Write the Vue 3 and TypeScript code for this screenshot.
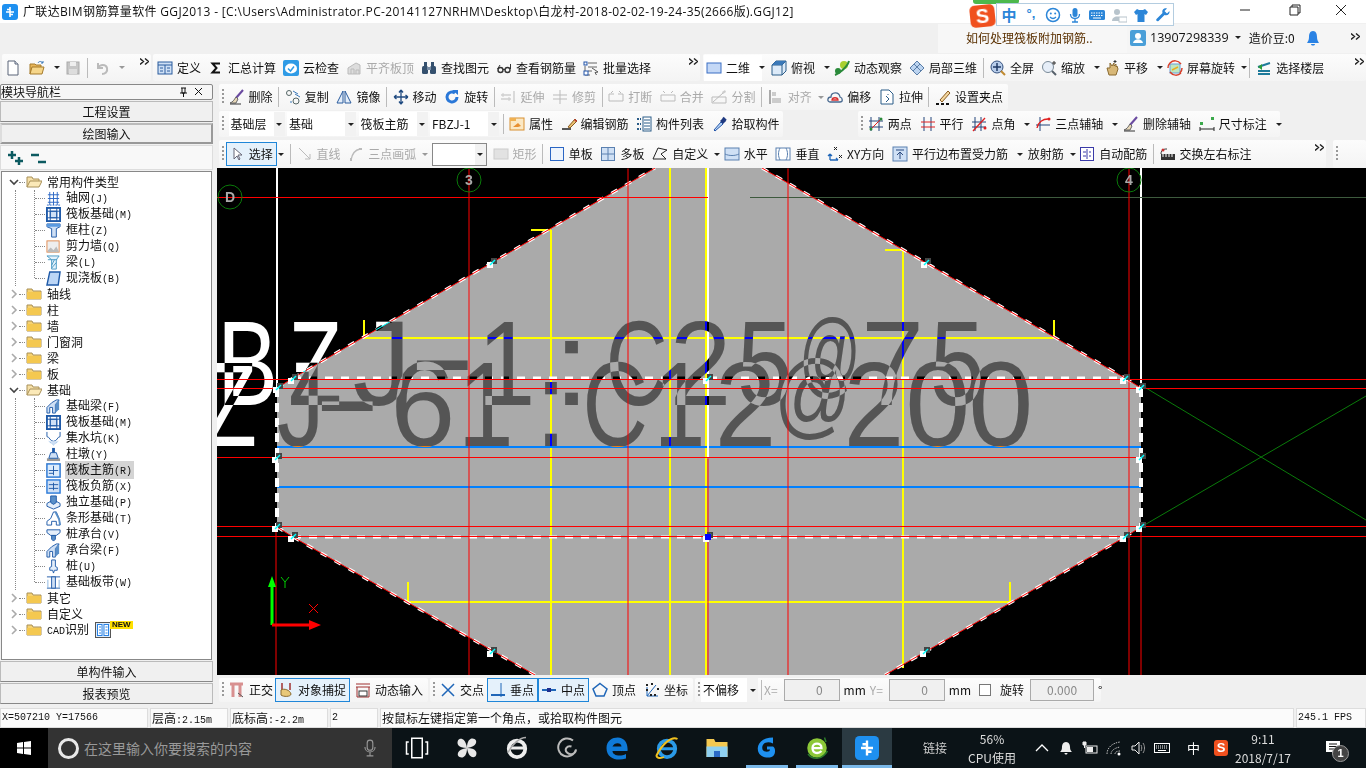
<template>
  <div class="app">
    <!-- 标题栏 -->
    <div class="title">
      <svg class="ic app-ic" viewBox="0 0 16 16" v-html="ICONS.app" />
      <span class="title-text">广联达BIM钢筋算量软件 GGJ2013 - [C:\Users\Administrator.PC-20141127NRHM\Desktop\白龙村-2018-02-02-19-24-35(2666版).GGJ12]</span>
      <svg class="win" viewBox="0 0 120 16" v-html="ICONS.win" />
      <!-- 搜狗输入法浮条 -->
      <div class="ime">
        <i class="ime-green" />
        <div class="ime-s">S</div>
        <div class="ime-bar">
          <span class="ime-slot ime-zh">中</span>
          <span class="ime-slot ime-dot">°,</span>
          <svg v-for="n in IME_ICONS" :key="n" class="ime-slot ic" viewBox="0 0 16 16" v-html="ICONS[n]" />
        </div>
      </div>
    </div>

    <!-- 资讯/账号条 -->
    <div class="menu">
      <div class="news">如何处理筏板附加钢筋..</div>
      <div class="account">
        <svg class="ic" viewBox="0 0 16 16" v-html="ICONS.user" />
        <span class="phone">13907298339</span>
        <i class="caret" />
        <span class="beans">造价豆:0</span>
        <svg class="ic bell" viewBox="0 0 16 16" v-html="ICONS.bell" />
        <svg class="more" viewBox="0 0 9 7" v-html="ICONS.more" />
      </div>
    </div>

    <!-- 工具栏 -->
    <div v-for="row in ROWS" :key="row.cls" class="row" :class="row.cls">
      <div v-for="g in row.groups" :key="g.cls" class="grp" :class="g.cls">
        <template v-for="(it, idx) in g.items" :key="idx">
          <i v-if="it.k === 'grip'" class="grip" />
          <i v-else-if="it.k === 'sep'" class="sep" />
          <svg v-else-if="it.k === 'more'" class="more" viewBox="0 0 9 7" v-html="ICONS.more" />
          <div v-else-if="it.k === 'combo'" class="combo" :class="it.cls" :style="{ width: it.w + 'px' }">
            <span>{{ it.t }}</span><b><i class="caret" /></b>
          </div>
          <div v-else-if="it.k === 'input'" class="input" :style="{ width: it.w + 'px' }">{{ it.t }}</div>
          <i v-else-if="it.k === 'check'" class="check" />
          <div v-else class="item" :class="[{ off: it.off, on: it.on }, it.cls]">
            <svg v-if="it.i" class="ic" viewBox="0 0 16 16" v-html="ICONS[it.i]" />
            <span v-if="it.t">{{ it.t }}</span>
            <i v-if="it.caret" class="caret" />
          </div>
        </template>
      </div>
    </div>

    <!-- 模块导航栏 -->
    <aside class="nav">
      <div class="nav-head">
        <span>模块导航栏</span>
        <svg class="nav-pin" viewBox="0 0 24 10" v-html="ICONS.pin" />
      </div>
      <div class="nav-btn">工程设置</div>
      <div class="nav-btn cur">绘图输入</div>
      <div class="nav-tools"><svg viewBox="0 0 42 16" v-html="ICONS.plusminus" /></div>
      <div class="tree">
        <template v-for="node in TREE" :key="node.t">
          <div class="node">
            <svg class="chev" viewBox="0 0 10 10" v-html="node.kids ? ICONS.chevOpen : ICONS.chevShut" />
            <i class="dots" />
            <svg class="ic" viewBox="0 0 16 16" v-html="node.kids ? ICONS.folderOpen : ICONS.folder" />
            <span class="node-t">
              <template v-if="node.cad"><span class="mono">CAD</span>识别</template>
              <template v-else>{{ node.t }}</template>
            </span>
            <template v-if="node.cad">
              <svg class="ic cad" viewBox="0 0 16 16" v-html="ICONS.cad" />
              <span class="new">NEW</span>
            </template>
          </div>
          <div v-if="node.kids" class="kidwrap">
            <div class="kids">
              <div v-for="kid in node.kids" :key="kid.t" class="kid" :class="{ sel: kid.sel }">
                <svg class="ic" viewBox="0 0 16 16" v-html="ICONS[kid.i]" />
                <span class="kid-t">{{ kid.t }}<span class="mono">({{ kid.key }})</span></span>
              </div>
            </div>
          </div>
        </template>
      </div>
      <div class="nav-btn">单构件输入</div>
      <div class="nav-btn">报表预览</div>
    </aside>

    <!-- 绘图区 -->
    <svg class="canvas" viewBox="217 168 1149 507">
      <rect x="217" y="168" width="1149" height="507" fill="#000" />
      <polygon :points="SHAPE" fill="#aaa" />
      <line v-for="(l, i) in YELLOW" :key="'y' + i" :x1="l[0]" :y1="l[1]" :x2="l[2]" :y2="l[3]" stroke="#ff0" stroke-width="2" />
      <line v-for="y in [447, 487]" :key="'b' + y" x1="277" x2="1141" :y1="y" :y2="y" stroke="#0080ff" stroke-width="2" />
      <line v-for="(l, i) in WHITE" :key="'w' + i" :x1="l[0]" :y1="l[1]" :x2="l[2]" :y2="l[3]" stroke="#fff" stroke-width="2" />
      <line x1="1141" y1="385" x2="1366" y2="520" stroke="#0a7a0a" />
      <line x1="1141" y1="527" x2="1366" y2="396" stroke="#0a7a0a" />
      <line x1="750" y1="197.5" x2="1366" y2="197.5" stroke="#3d5a3d" />
      <!-- 虚线边界 -->
      <polyline v-for="(p, i) in DIAGS" :key="'d' + i" :points="p" fill="none" stroke="#fff" stroke-width="3" stroke-dasharray="7 9" />
      <polyline v-for="(p, i) in DIAGS" :key="'r' + i" :points="p" fill="none" stroke="#f00" />
      <line v-for="y in [378, 537]" :key="'h' + y" x1="293" x2="1125" :y1="y" :y2="y" stroke="#fff" stroke-width="3" stroke-dasharray="8 8" />
      <line v-for="x in [277, 1141]" :key="'v' + x" :x1="x" :x2="x" y1="388" y2="527" stroke="#fff" stroke-width="4" stroke-dasharray="9 6" />
      <!-- 反色大字标注 -->
      <text
        v-for="(g, i) in GLYPHS" :key="'g' + i" class="stamp"
        :x="g.x" :y="g.y" :font-size="g.size" :textLength="g.len" lengthAdjust="spacingAndGlyphs"
      >{{ g.ch }}</text>
      <line v-for="(l, i) in RED" :key="'e' + i" :x1="l[0]" :y1="l[1] + 0.5" :x2="l[2]" :y2="l[3] + 0.5" stroke="#f00" />
      <!-- 轴号 -->
      <g v-for="a in AXES" :key="a.t">
        <circle :cx="a.x" :cy="a.y" r="12" fill="none" stroke="#0a7a0a" />
        <text class="axis" :x="a.x" :y="a.y + 5">{{ a.t }}</text>
      </g>
      <!-- 夹点 -->
      <g v-for="(h, i) in HANDLES" :key="'p' + i" :transform="`translate(${h[0]} ${h[1]})`">
        <rect x="-1" y="-5" width="6" height="6" fill="#444" />
        <rect x="-5" y="-1" width="6" height="6" fill="#fff" />
        <path d="M-2 2 3 -3" stroke="#0ff" stroke-width="1.5" />
      </g>
      <rect x="705" y="534" width="6" height="6" fill="#00f" />
      <!-- 坐标系 -->
      <path d="M270.5 625V587H268L272 576 276 587H273.5V625Z" fill="#0f0" />
      <path d="M272 623.500H309V620L321 625 309 630V626.500H272Z" fill="#f00" />
      <path d="M281 577 285 582 289 577M285 582V588" fill="none" stroke="#0c0" />
      <path d="M309 604 318 613M318 604 309 613" fill="none" stroke="#f00" />
    </svg>

    <!-- 状态栏 -->
    <div class="status">
      <div class="cell s1 mono">X=507210 Y=17566</div>
      <div class="cell s2">层高<span class="mono">:2.15m</span></div>
      <div class="cell s3">底标高<span class="mono">:-2.2m</span></div>
      <div class="cell s4 mono">2</div>
      <div class="cell s5">按鼠标左键指定第一个角点，或拾取构件图元</div>
      <div class="cell s6 mono">245.1 FPS</div>
    </div>

    <!-- 任务栏 -->
    <div class="task">
      <div class="start"><svg class="ic" viewBox="0 0 16 16" v-html="ICONS.winlogo" /></div>
      <div class="search">
        <i class="ring" />
        <span>在这里输入你要搜索的内容</span>
        <svg class="ic mic" viewBox="0 0 16 16" v-html="ICONS.micGrey" />
      </div>
      <div v-for="t in TASK" :key="t.i" class="task-btn" :class="{ open: t.open, act: t.act }">
        <svg class="tb-ic" viewBox="0 0 16 16" v-html="ICONS[t.i]" />
      </div>
      <div class="tray-link">链接</div>
      <div class="cpu"><span>56%</span><span>CPU使用</span></div>
      <div class="tray">
        <svg v-for="n in TRAY" :key="n" class="ic" viewBox="0 0 16 16" v-html="ICONS[n]" />
        <span class="tray-zh">中</span>
        <div class="tray-s">S</div>
      </div>
      <div class="clock"><span>9:11</span><span>2018/7/17</span></div>
      <div class="notify">
        <svg class="ic" viewBox="0 0 16 16" v-html="ICONS.note" />
        <span class="badge">1</span>
      </div>
    </div>
  </div>
</template>

<script setup lang="ts">
interface Item {
  k?: string
  i?: string
  t?: string
  off?: boolean
  on?: boolean
  caret?: boolean
  w?: number
  cls?: string
}

const IME_ICONS = ['smile', 'imeMic', 'imeKbd', 'imePerson', 'shirt', 'wrench']
const TRAY = ['trayUp', 'trayBell', 'trayPower', 'trayWifi', 'trayVol', 'trayKbd']
const TASK = [
  { i: 'tablet' }, { i: 'fan' }, { i: 'ieWhite' }, { i: 'swirl' }, { i: 'edge' },
  { i: 'ie', }, { i: 'explorer', }, { i: 'gsoft', open: true }, { i: 'greenE', open: true }, { i: 'app', act: true },
]

const l = (c: string, w = 1) => `fill="none" stroke="${c}" stroke-width="${w}"`

// 图标都是 16x16 的手绘简化版
const ICONS: Record<string, string> = {
  app: `<rect width="16" height="16" rx="3" fill="#1e90f0"/><path d="M8 3v10M4 8h8M5 5.500h3M8 10.500h3" ${l('#fff', 1.6)}/>`,
  win: `<path d="M0 8h10" ${l('#222')}/><path d="M50 5h8v8h-8zM52 5V3h8v8h-2" ${l('#222')}/><path d="M96 3l10 10M106 3 96 13" ${l('#222')}/>`,
  more: `<path d="M0 0.500 3.500 3.500 0 6.500M5 0.500 8.500 3.500 5 6.500" ${l('#222', 1.4)}/>`,
  smile: `<circle cx="8" cy="8" r="6.500" ${l('#2c86d8', 1.5)}/><circle cx="5.800" cy="6.500" r="1" fill="#2c86d8"/><circle cx="10.200" cy="6.500" r="1" fill="#2c86d8"/><path d="M5 10c2 2 4 2 6 0" ${l('#2c86d8', 1.3)}/>`,
  imeMic: `<rect x="5.500" y="1" width="5" height="9" rx="2.500" fill="#2c86d8"/><path d="M3.500 7c0 6 9 6 9 0M8 12v3M5 15h6" ${l('#2c86d8', 1.3)}/>`,
  imeKbd: `<rect y="3" width="16" height="10" rx="1.500" fill="#2c86d8"/><path d="M2 6h12M2 8.500h12" stroke="#fff" stroke-dasharray="1.500 1"/><path d="M4 11h8" stroke="#fff"/>`,
  imePerson: `<circle cx="6" cy="5" r="3" fill="#b8c4cc"/><path d="M1 14c0-6 10-6 10 0z" fill="#b8c4cc"/><rect x="8" y="10" width="8" height="5" fill="#fff" stroke="#b8c4cc"/>`,
  shirt: `<path d="M4 2 1 5l2 3 1.500-1V15h7V7L13 8l2-3-3-3-2 1H6z" fill="#2c86d8"/>`,
  wrench: `<path d="M14.500 4 12 6.500 9.500 4 12 1.500C9 0.500 6.500 3 7.500 6L1.500 12c-1 1 .5 3 2 2l6-6c3 1 5.500-1 5-4z" fill="#2c86d8"/>`,
  user: `<rect width="16" height="16" rx="2" fill="#4a9fd8"/><circle cx="8" cy="6" r="3" fill="#fff"/><path d="M3 13c1-5 9-5 10 0z" fill="#fff"/>`,
  bell: `<path d="M8 1c-3 0-4 3-4 6 0 3-1 4-2 6h12c-1-2-2-3-2-6 0-3-1-6-4-6z" fill="#2a82e4"/><path d="M6 14c0 2 4 2 4 0z" fill="#2a82e4"/>`,
  new: `<path d="M3 1h7l3 3v11H3z" fill="#fff" stroke="#5a6578"/><path d="M10 1v3h3" fill="#dfe5ef" stroke="#5a6578"/>`,
  open: `<path d="M1 14V4h5l1 1h5v2" fill="#e8b65a" stroke="#a57a2b"/><path d="M1 14 3 7h12l-2 7z" fill="#f6d68a" stroke="#a57a2b"/><path d="M9 3c1-2 3-2 5 0M14 1v2h-2" ${l('#3a78b8')}/>`,
  save: `<rect x="2" y="2" width="12" height="12" fill="#c6c6c6" stroke="#aaa"/><rect x="5" y="2" width="6" height="4" fill="#eee"/><rect x="4" y="9" width="8" height="5" fill="#ddd"/>`,
  undo: `<path d="M4 3v5h5M4 8c2-4 8-4 9 0s-2 6-5 6" ${l('#bbb', 2)}/>`,
  define: `<rect x="1" y="2" width="14" height="12" fill="#cfe0f5" stroke="#2b5c9e"/><path d="M1 5h14M8 5v9M3 8h3M3 11h3M10 8h3M10 11h3" ${l('#2b5c9e')}/>`,
  sigma: `<path d="M12 3.500H4.500L8.500 8l-4 4.500H12" ${l('#111', 2)}/>`,
  cloud: `<rect width="16" height="16" rx="2" fill="#2f9be6"/><ellipse cx="8" cy="8.500" rx="6" ry="5" fill="#fff"/><path d="M5 8.500 7.500 11 11 6.500" ${l('#2f9be6', 1.500)}/>`,
  flush: `<path d="M2 14V8l8-5 4 2v9z" fill="#ddd" stroke="#bbb"/><path d="M5 14V9h3v5M10 14v-4h3v4" ${l('#bbb')}/>`,
  binocs: `<rect x="1" y="6" width="6" height="8" rx="1.500" fill="#34506e"/><rect x="9" y="6" width="6" height="8" rx="1.500" fill="#34506e"/><rect x="3" y="2" width="3" height="5" fill="#34506e"/><rect x="10" y="2" width="3" height="5" fill="#34506e"/><rect x="6" y="7" width="4" height="3" fill="#7a8ea6"/>`,
  glasses: `<circle cx="4.500" cy="10" r="2.500" ${l('#333', 1.4)}/><circle cx="11.500" cy="10" r="2.500" ${l('#333', 1.4)}/><path d="M7 9.500h2M1.500 9 4 5M14.500 9V4" ${l('#333')}/>`,
  batch: `<rect x="1" y="2" width="3" height="3" fill="none" stroke="#2255aa"/><path d="M5 3h9M5 7h9M5 11h4M2 6v9h5" ${l('#666')}/><rect x="1" y="11" width="4" height="4" fill="#fff" stroke="#2255aa"/><path d="M9 8l6 4-3 .5 1.500 2.500" ${l('#555')}/>`,
  view2d: `<rect x="1" y="3" width="14" height="10" fill="#c4d8f6" stroke="#3a6fc4"/>`,
  view3d: `<path d="M1 5 5 1h10v10l-4 4H1z" fill="#dceaf8" stroke="#2b5c88"/><path d="M1 5h10v10M11 5l4-4" ${l('#2b5c88')}/><path d="M1 5 5 1h10l-4 4z" fill="#3a78b8"/>`,
  orbit: `<circle cx="10" cy="5" r="4" fill="#a8d030"/><path d="M1 15C4 14 13 8 15 1" ${l('#2a8a3a', 2)}/><circle cx="4" cy="11" r="3" fill="#2a8a3a"/>`,
  local3d: `<path d="M1 8 8 1l7 7-7 7z" fill="#bcd4f0" stroke="#5a7ea8"/><path d="M5 4l7 7M8 1v0M4 11l7-7" ${l('#5a7ea8')}/>`,
  full: `<circle cx="7" cy="7" r="6" fill="#b8cdea" stroke="#33507e"/><path d="M7 3v8M3 7h8" ${l('#1f3a66', 1.500)}/><path d="M11 11l4 4" ${l('#c08a30', 2)}/>`,
  zoom: `<circle cx="7" cy="7" r="5.500" fill="#e6eef8" stroke="#7a8a98"/><path d="M11 11l4 4" ${l('#56606a', 2)}/><path d="M13 1v4M11 3h4" ${l('#333')}/>`,
  pan: `<path d="M3 8l2 7h7l2-6-1-3-1 1V4l-2 2V3L8 6 6 3v5z" fill="#d8b878" stroke="#8a6a30"/><path d="M11 0v3M9.500 1.500h3" ${l('#333')}/>`,
  rot: `<rect x="3" y="4" width="10" height="9" fill="#bfe6c0" stroke="#6aa0d8"/><path d="M3 3c3-3 8-3 11 1M14 13c-3 3-8 3-11-1M1 8c0-2 1-4 2-5M15 8c0 2-1 4-2 5" ${l('#d8402a', 1.500)}/><path d="M5 10l6-3" ${l('#e8b020', 1.500)}/>`,
  floors: `<path d="M2 7 14 3M2 11h12M2 14h12" ${l('#1e7a9a', 2)}/><path d="M2 7 6 4v6z" fill="#2a9a3a"/>`,
  broom: `<path d="M14 1 7 9" ${l('#6a4aa0', 2)}/><path d="M7 8l2 2-2 4H1c3-1 4-3 6-6z" fill="#e8d8b8" stroke="#666"/><path d="M1 15h11" ${l('#333')}/>`,
  copy: `<circle cx="4" cy="4" r="2.500" ${l('#566')}/><circle cx="11" cy="12" r="3" ${l('#566')}/><path d="M8 2l5 3M15 8l-5-3M7 13H5" ${l('#3a78b8')}/>`,
  mirror: `<path d="M7 2 1 14h6zM9 2l6 12H9z" fill="#e4eefa" stroke="#2b5c9e"/>`,
  move: `<path d="M8 1v14M1 8h14M8 1 6 3.500M8 1l2 2.500M8 15l-2-2.500M8 15l2-2.500M1 8l2.500-2M1 8l2.500 2M15 8l-2.500-2M15 8l-2.500 2" ${l('#1f4a80', 1.300)}/>`,
  spin: `<path d="M13 8a5 5 0 1 1-2-4" ${l('#2a78d8', 3)}/><path d="M8 1h6v5z" fill="#2a78d8"/>`,
  extend: `<path d="M14 2v12M1 6h10M1 10h10" ${l('#bbb')}/><path d="M3 4v4M9 8v4" stroke="#ccc"/>`,
  trim: `<path d="M8 1v14M1 6h14M1 10h14" ${l('#bbb')}/>`,
  brk: `<path d="M1 5h5M10 5h5M1 12h14M1 5v7M15 5v7" ${l('#bbb')}/><path d="M5 2 3 4M11 2l2 2" ${l('#bbb')}/>`,
  merge: `<path d="M1 6h14M1 12h14M1 6v6M15 6v6" ${l('#bbb')}/><path d="M3 2l2 2M13 2l-2 2" ${l('#bbb')}/>`,
  split: `<path d="M1 14V8h14v6zM2 13l10-9" ${l('#bbb')}/><path d="M11 3l3-2 1 2-3 2z" fill="#ccc"/>`,
  alignL: `<path d="M2 1v14" ${l('#aaa', 2)}/><rect x="4" y="3" width="4" height="4" fill="#ccc"/><rect x="4" y="9" width="9" height="5" fill="#ccc"/>`,
  offset: `<path d="M3 13c-3 0-3-5 1-5 0-5 8-6 9 0 3 1 3 5 0 5z" ${l('#4a6a90', 1.300)}/><path d="M5 11c0-3 6-3 6 0z" ${l('#d83030', 1.300)}/>`,
  stretch: `<path d="M2 1h8l4 4v10H2z" fill="#fff" stroke="#2b5c88"/><path d="M7 7l3 3-3 3M9 5v1" ${l('#2b5c88')}/>`,
  grips: `<path d="M1 15h3M6 15h3M11 15h3" ${l('#111', 2)}/><path d="M5 11 13 2l2 2-8 9z" fill="#f4d8a0" stroke="#8a5a20"/>`,
  prop: `<rect x="1" y="2" width="14" height="12" fill="#fbe8c4" stroke="#d89030"/><path d="M1 2h6v3H1z" fill="#f0b050"/><path d="M4 11l5-4 3 3-3 1z" fill="#e89030"/>`,
  pencil: `<path d="M1 13h9" ${l('#222', 1.500)}/><path d="M7 11 14 3l2 2-7 7z" fill="#e8c070" stroke="#8a5a20"/><path d="M14 3l2 2 -1 1-2-2z" fill="#c03030"/>`,
  list: `<rect x="7" y="1" width="8" height="14" fill="#fff" stroke="#2b5c88"/><path d="M8 4h6M8 7h6M8 10h6M8 13h6" stroke="#2b5c88"/><path d="M1 3h4M1 8h4M1 13h4" stroke="#2b5c88" stroke-dasharray="2 1" stroke-width="2"/>`,
  pick: `<path d="M2 14 9 6l2 2-8 7z" fill="#b8d4f4" stroke="#2255aa"/><path d="M8 5l3-3 3 3-3 3z" fill="#1f3a80"/><path d="M11 1.500l3 3" ${l('#1f3a80', 2)}/>`,
  twoPt: `<path d="M3 1v14M11 1v14M1 5h14M1 11h14" ${l('#22447a')}/><path d="M3 13 13 3" ${l('#e02020')}/><circle cx="3" cy="13" r="1.500" fill="#2a8a3a"/><circle cx="13" cy="3" r="1.500" fill="#2a8a3a"/>`,
  para: `<path d="M4 1v14M11 1v14" ${l('#22447a')}/><path d="M1 6h14M1 11h14" ${l('#e02020')}/>`,
  angle: `<path d="M4 1v14M10 1v14M1 6h14M1 11h14" ${l('#22447a')}/><path d="M2 15 14 2" ${l('#e02020', 1.300)}/><circle cx="14" cy="12" r="1.500" fill="#e02020"/>`,
  threePt: `<path d="M5 1v14M1 9h14" ${l('#22447a')}/><path d="M2 12C3 6 8 3 13 3" ${l('#e02020', 1.300)}/><circle cx="14" cy="3" r="1.500" fill="#e02020"/>`,
  dim: `<path d="M1 11v4M15 11v4M1 13h14" ${l('#222')}/><rect x="1" y="6" width="3" height="3" fill="#3aa84a"/><rect x="12" y="1" width="3" height="3" fill="#3aa84a"/>`,
  cursor: `<path d="M5 2v11l3-3 2 4 1-1-2-4h4z" fill="#fff" stroke="#667"/>`,
  line: `<path d="M2 2 13 13M13 8v5H8" ${l('#bbb')}/>`,
  arc: `<path d="M3 14C4 8 7 4 12 3" ${l('#bbb', 1.300)}/><rect x="2" y="12" width="2" height="3" fill="#bbb"/><rect x="11" y="2" width="3" height="2" fill="#bbb"/>`,
  rect: `<rect x="1" y="3" width="14" height="10" fill="#e2e2e2" stroke="#ccc"/>`,
  single: `<rect x="1.500" y="1.500" width="13" height="13" fill="#eef4fc" stroke="#2b66c4"/>`,
  multi: `<rect x="1.500" y="1.500" width="13" height="13" fill="#cfe0f5" stroke="#5a80b0"/><path d="M8 1.500v13M1.500 8h13" ${l('#5a80b0')}/>`,
  custom: `<path d="M1 13 6 2l9 2-6 4 5 5z" ${l('#222')}/>`,
  horiz: `<rect x="1" y="2" width="14" height="12" fill="#cfe0f5" stroke="#5a80b0"/><path d="M1 8c4 2 10 2 14 0" ${l('#5a80b0')}/>`,
  vert: `<rect x="1" y="2" width="14" height="12" fill="#fff" stroke="#5a80b0"/><path d="M5 2c-2 4-2 8 0 12M11 2c2 4 2 8 0 12" ${l('#5a80b0')}/>`,
  xy: `<path d="M3 8v6M3 14h8M3 8 1 10M3 8l2 2M11 14l-2-2" ${l('#1f66b8', 1.300)}/><path d="M7 1l3 3M10 1 7 4M12 9l3 3M15 9l-3 3" ${l('#222')}/>`,
  paraPlace: `<rect x="1" y="1" width="14" height="14" fill="#cfe0f5" stroke="#5a80b0"/><path d="M8 13V6M5 9l3-3 3 3M4 4h8" ${l('#2b4a80')}/>`,
  auto: `<rect x="1.500" y="1.500" width="13" height="13" fill="#fff" stroke="#3a3aa8"/><path d="M8 3v10M4 6h3M4 10h3M10 6h2M10 10h2" ${l('#3a3aa8')}/>`,
  swap: `<path d="M1 8c0-5 4-5 6-5" ${l('#333')}/><rect x="1" y="8" width="14" height="6" fill="#333"/><path d="M3 8v3M6 8v3M9 8v3M12 8v3" stroke="#fff"/><circle cx="3" cy="4" r="1.500" fill="#c83030"/>`,
  ortho: `<path d="M1 2h13M4 2v13M11 2v13" ${l('#d89090', 3)}/><path d="M9 11l5 4" ${l('#555')}/>`,
  snap: `<path d="M4 1v7M12 1v7" ${l('#a03030', 1.500)}/><path d="M3 8c3-2 9 0 10 4 0 3-8 3-10 1z" fill="#e8c878" stroke="#8a6a30"/>`,
  dyn: `<path d="M1 2h14M1 5h14M2 5v10h12V5" ${l('#a03030')}/><rect x="4" y="9" width="8" height="5" fill="#fff" stroke="#333"/>`,
  cross: `<path d="M2 2 14 14M14 2 2 14" ${l('#1f66b8', 1.500)}/>`,
  perp: `<path d="M1 13h14" ${l('#1f66b8', 2)}/><path d="M11 1v14" ${l('#1f66b8')}/>`,
  mid: `<path d="M1 8h14" ${l('#1f66b8', 2)}/><rect x="6" y="6" width="4" height="4" fill="#1f2f90"/>`,
  vertex: `<path d="M8 1.500 15 7l-3 7H4L1 7z" ${l('#1f66b8', 1.500)}/>`,
  coord: `<path d="M3 14 12 3M3 5v9h11" ${l('#1f66b8')}/><path d="M2 3h2M2 8h2M7 2h2M13 7h2M10 13h2M6 13h2" stroke="#222" stroke-width="2"/>`,
  pin: `<path d="M3 1h5M4 1v5h3V1M2 6h7M5.500 6v4" ${l('#111')}/><path d="M17 1l7 7M24 1l-7 7" ${l('#111')}/>`,
  plusminus: `<path d="M1 5h8M5 1v8M8 11h8M12 7v8" ${l('#0c5a60', 2.500)}/><path d="M24 5h8M31 12h8" ${l('#0c5a60', 2.500)}/>`,
  chevOpen: `<path d="M1 3 5 7l4-4" ${l('#444', 1.600)}/>`,
  chevShut: `<path d="M3 1l4 4-4 4" ${l('#aaa', 1.600)}/>`,
  folder: `<path d="M1 13V3h5l1 2h8v8z" fill="#f6d272" stroke="#a89058"/><path d="M1 13V6h14v7z" fill="#f4c850"/>`,
  folderOpen: `<path d="M1 13V3h5l1 2h6v2" fill="#f6e0a8" stroke="#a89058"/><path d="M1 13 4 7h12l-3 6z" fill="#fbe9b8" stroke="#a89058"/>`,
  cad: `<rect x="0.500" y="0.500" width="15" height="15" fill="#dcecfc" stroke="#555"/><rect x="2.500" y="2.500" width="4.500" height="11" fill="#fff" stroke="#2a82e4"/><rect x="9" y="2.500" width="4.500" height="11" fill="#fff" stroke="#2a82e4"/><path d="M4 5h2M4 8h2M4 11h2M10.500 5h2M10.500 8h2M10.500 11h2" stroke="#2a82e4"/>`,
  tGrid: `<path d="M2 4h12M2 8h12M2 12h12M4 1v14M8 1v14M12 1v14" ${l('#2b66c4')}/><path d="M1 15h14" stroke="#2b66c4" stroke-dasharray="2 1"/>`,
  tRaft: `<rect x="1" y="1" width="14" height="14" fill="#fff" stroke="#1f5aa8" stroke-width="2"/><rect x="4.500" y="4.500" width="7" height="7" fill="#cfe0f5" stroke="#1f5aa8"/><path d="M1 4.500h14M1 11.500h14M4.500 1v14M11.500 1v14" ${l('#1f5aa8')}/>`,
  tCol: `<path d="M1 1h14v3l-4 2v9H6V6L1 4z" fill="#cfe0f5" stroke="#1f5aa8"/><path d="M1 1h14v3H1z" fill="#5a9ae0"/>`,
  tWall: `<rect x="1" y="2" width="13" height="12" fill="#eee" stroke="#e08a50"/><path d="M2 12l3-3 3 3 3-4 3 6H2z" fill="#bbb"/>`,
  tBeam: `<path d="M1 1h13l-3 4v10H6V5z" fill="#e4f2fc" stroke="#4a9ac4"/><path d="M2 5h10M9 5l-3 6M11 8l-5 6" ${l('#4a9ac4')}/>`,
  tSlab: `<path d="M4 1h11l-2 14H1z" fill="#bcd6f6" stroke="#1f5aa8" stroke-width="1.500"/>`,
  tFBeam: `<path d="M1 15V9l5-5 5-3h3l-4 5v9H7V9H4v6z" fill="#cfe0f5" stroke="#1f5aa8"/><path d="M10 6l4-5v10l-4 4z" fill="#5a8fc8"/>`,
  tPit: `<path d="M1 1v5c3 0 3 5 7 5s4-5 7-5V1" ${l('#1f5aa8')}/><path d="M3 11l5 4 5-4" fill="#cfe0f5" stroke="#8ab4e0" stroke-dasharray="1 1"/>`,
  tPier: `<path d="M1 12h14v3H1z" fill="#999"/><path d="M5 6h6l2 6H3z" fill="#cfe0f5" stroke="#1f5aa8"/><rect x="6.500" y="1" width="3" height="5" fill="#1f5aa8"/>`,
  tMain: `<rect x="1" y="1" width="14" height="14" fill="#dcecfc" stroke="#2a7ad8" stroke-width="1.500"/><path d="M8 3v10M3 8h10M3 11h5" ${l('#1f5aa8')}/>`,
  tNeg: `<rect x="1" y="1" width="14" height="14" fill="#cfe0f5" stroke="#2a7ad8" stroke-width="1.500"/><path d="M8 4v8M3 6h10M3 10h10" ${l('#1f5aa8')}/>`,
  tIso: `<path d="M1 9 8 5l7 4v3l-7 3-7-3z" fill="#e4eefa" stroke="#1f5aa8"/><path d="M5 1h6v7l-3 2-3-2z" fill="#5a8fc8" stroke="#1f5aa8"/>`,
  tStrip: `<path d="M1 15v-4l4-3 3-7h3l3 7 1 7h-4v-4H6v4z" fill="#fff" stroke="#1f5aa8"/><path d="M10 1l4 8 1 6" ${l('#5a8fc8', 2)}/>`,
  tCap: `<path d="M1 3h14v3l-4 3H5L1 6z" fill="#e4eefa" stroke="#1f5aa8"/><path d="M6 9h4v4l-2 2-2-2z" fill="#5a8fc8" stroke="#1f5aa8"/>`,
  tPile: `<path d="M6 1h4v7l2 1v3H9l-1 3-1-3H4V9l2-1z" fill="#e4eefa" stroke="#1f5aa8"/>`,
  tBand: `<path d="M1 2h14M1 14h14" ${l('#1f5aa8')}/><rect x="6" y="2" width="4" height="12" fill="#cfe0f5" stroke="#1f5aa8"/><path d="M2 5v9M14 5v9" stroke="#8ab4e0"/>`,
  winlogo: `<path d="M1 3l6-1v5.500H1zM8 2l7-1v6.500H8zM1 8.500h6V14l-6-1zM8 8.500h7V15l-7-1z" fill="#fff"/>`,
  micGrey: `<rect x="5.500" y="1" width="5" height="9" rx="2.500" ${l('#999')}/><path d="M3.500 7c0 6 9 6 9 0M8 12v3M5 15h6" ${l('#999')}/>`,
  tablet: `<rect x="4.500" y="1.500" width="7" height="13" ${l('#fff')}/><path d="M2.500 4H1v8h1.500M13.500 4H15v8h-1.500" ${l('#fff')}/>`,
  fan: `<path d="M8 8C2 8 1 5 2 3s5-2 6 5zM8 8c0-6 3-7 5-6s2 5-5 6zM8 8c6 0 7 3 6 5s-5 2-6-5zM8 8c0 6-3 7-5 6s-2-5 5-6z" fill="#e8e8e8"/>`,
  ieWhite: `<circle cx="8" cy="8.500" r="5.500" ${l('#eee', 2.500)}/><path d="M3 8h10" ${l('#eee', 2)}/><path d="M14 1c-4 0-9 4-12 10" ${l('#aaa')}/>`,
  swirl: `<path d="M12 3a6 6 0 1 0 2 6c0 3-4 4-6 2s0-5 3-4" ${l('#bbb', 1.300)}/>`,
  edge: `<path d="M15 10H5c0 3 5 4 9 2v3c-6 2-13 0-13-7C1 3 5 1 8.500 1 13 1 15.500 5 15 10zM5 7h6c0-3-5-3-6 0z" fill="#0f7ad8"/>`,
  ie: `<circle cx="8" cy="8.500" r="5.500" ${l('#2a9ae8', 2.500)}/><path d="M3 8.500h10" ${l('#2a9ae8', 2)}/><path d="M15 2C11 0 5 5 1 13c0 2 3 2 5 1" ${l('#f0c020', 1.300)}/>`,
  explorer: `<path d="M1 14V2h5l1 2h8v10z" fill="#f4c850"/><rect x="1" y="7" width="14" height="7" fill="#8fd0f0"/><rect x="6" y="10" width="4" height="4" fill="#2a6ac8"/>`,
  gsoft: `<path d="M12 1C5 1 1 5 2 10c1 4 6 5 9 4 3-1 3-6 1-7H8v2h2c0 2-4 2-5 0-1-4 3-6 7-4z" fill="#1e90f0"/>`,
  greenE: `<circle cx="8" cy="8" r="6.500" fill="#8cc838"/><path d="M5 8h6c0-4-6-4-6 0s4 4 6 2" ${l('#fff', 1.500)}/><path d="M2 12c4 5 10 3 13-2M13 1l1 3" ${l('#2a7a2a')}/>`,
  trayUp: `<path d="M2 11l6-6 6 6" ${l('#fff', 1.300)}/>`,
  trayBell: `<path d="M8 2c-3 0-4 3-4 5 0 3-1 4-2 5h12c-1-1-2-2-2-5 0-2-1-5-4-5z" fill="#eee"/><path d="M6.500 13c0 2 3 2 3 0z" fill="#eee"/>`,
  trayPower: `<rect x="4" y="6" width="11" height="7" ${l('#eee')}/><rect x="5" y="7" width="6" height="5" fill="#eee"/><path d="M1 2h3v3H1zM2.500 5v3" fill="#eee" stroke="#eee"/>`,
  trayWifi: `<path d="M1 14C1 8 6 3 14 2M5 14c0-3 3-6 9-7M9 14c0-2 2-3 5-3" stroke="#bbb" stroke-dasharray="1.500 1" fill="none"/><circle cx="13" cy="14" r="1.500" fill="#fff"/>`,
  trayVol: `<path d="M2 6h3l4-4v12l-4-4H2z" ${l('#eee')}/><path d="M11 5c1 2 1 4 0 6M13 3c2 3 2 7 0 10" ${l('#999')}/>`,
  trayKbd: `<rect x="0.500" y="3.500" width="15" height="9" ${l('#fff')}/><path d="M2 6h12M2 8h12" stroke="#fff" stroke-dasharray="1 1"/><path d="M4 10.500h8" stroke="#fff"/>`,
  note: `<path d="M1 1h14v11H9l-2 3v-3H1z" fill="#fff"/><path d="M4 4h8M4 6.500h8M4 9h8" stroke="#111"/>`,
}

const SEP: Item = { k: 'sep' }
const GRIP: Item = { k: 'grip' }
const MORE: Item = { k: 'more', cls: 'end' }
const it = (i: string, t?: string, extra: Partial<Item> = {}): Item => ({ i, t, ...extra })
const off = (i: string, t?: string, extra: Partial<Item> = {}): Item => ({ i, t, off: true, ...extra })
const combo = (t: string, w: number, cls = ''): Item => ({ k: 'combo', t, w, cls })

const ROWS: { cls: string; groups: { cls: string; items: Item[] }[] }[] = [
  {
    cls: 'r1',
    groups: [
      { cls: 'g1a', items: [it('new'), it('open', '', { caret: true }), off('save'), SEP, off('undo', '', { caret: true }), MORE] },
      {
        cls: 'g1b',
        items: [
          it('define', '定义'), it('sigma', '汇总计算'), it('cloud', '云检查'), off('flush', '平齐板顶'),
          it('binocs', '查找图元'), it('glasses', '查看钢筋量'), it('batch', '批量选择'), MORE,
        ],
      },
      {
        cls: 'g1c',
        items: [
          it('view2d', '二维', { caret: true, cls: 'cur' }), it('view3d', '俯视', { caret: true }), it('orbit', '动态观察'),
          it('local3d', '局部三维'), SEP, it('full', '全屏'), it('zoom', '缩放', { caret: true }), it('pan', '平移', { caret: true }),
          it('rot', '屏幕旋转', { caret: true, cls: 'tight' }), SEP, it('floors', '选择楼层'), MORE,
        ],
      },
    ],
  },
  {
    cls: 'r2',
    groups: [
      {
        cls: 'g2a',
        items: [
          GRIP, it('broom', '删除'), SEP, it('copy', '复制'), it('mirror', '镜像'), SEP, it('move', '移动'), it('spin', '旋转'), SEP,
          off('extend', '延伸'), off('trim', '修剪'), SEP, off('brk', '打断'), off('merge', '合并'), off('split', '分割'), SEP,
          off('alignL', '对齐', { caret: true, cls: 'tight' }), it('offset', '偏移'), it('stretch', '拉伸'), SEP, it('grips', '设置夹点'),
        ],
      },
    ],
  },
  {
    cls: 'r3',
    groups: [
      {
        cls: 'g3a',
        items: [
          GRIP, combo('基础层', 56), combo('基础', 69), combo('筏板主筋', 69), combo('FBZJ-1', 69), SEP,
          it('prop', '属性'), it('pencil', '编辑钢筋'), it('list', '构件列表'), it('pick', '拾取构件'),
        ],
      },
      {
        cls: 'g3b',
        items: [
          GRIP, it('twoPt', '两点'), it('para', '平行'), it('angle', '点角', { caret: true }), it('threePt', '三点辅轴', { caret: true }),
          it('broom', '删除辅轴'), it('dim', '尺寸标注', { caret: true }),
        ],
      },
    ],
  },
  {
    cls: 'r4',
    groups: [
      {
        cls: 'g4a',
        items: [
          GRIP, it('cursor', '选择', { on: true }), it('', '', { caret: true, cls: 'solo' }), SEP, off('line', '直线'), off('arc', '三点画弧', { caret: true, cls: 'tight' }),
          combo('', 55, 'boxed'), off('rect', '矩形'), SEP, it('single', '单板'), it('multi', '多板'), it('custom', '自定义', { caret: true, cls: 'tight' }),
          it('horiz', '水平'), it('vert', '垂直'), it('xy', 'XY方向'), it('paraPlace', '平行边布置受力筋', { caret: true }),
          it('', '放射筋', { caret: true, cls: 'tight' }), it('auto', '自动配筋'), SEP, it('swap', '交换左右标注'), MORE,
        ],
      },
      { cls: 'g4b', items: [GRIP] },
    ],
  },
  {
    cls: 'r5',
    groups: [
      { cls: 'g5a', items: [GRIP, it('ortho', '正交'), it('snap', '对象捕捉', { on: true, cls: 'snug' }), it('dyn', '动态输入')] },
      {
        cls: 'g5b',
        items: [
          GRIP, it('cross', '交点'), it('perp', '垂点', { on: true, cls: 'pair-a' }), it('mid', '中点', { on: true, cls: 'pair-b' }),
          it('vertex', '顶点'), it('coord', '坐标'),
        ],
      },
      {
        cls: 'g5c',
        items: [
          GRIP, combo('不偏移', 57, 'keep'), SEP, off('', 'X='), { k: 'input', t: '0', w: 56 }, it('', 'mm'), off('', 'Y='), { k: 'input', t: '0', w: 56 }, it('', 'mm'),
          { k: 'check' }, it('', '旋转'), { k: 'input', t: '0.000', w: 64 }, it('', '°'),
        ],
      },
    ],
  },
]

type Kid = { t: string; key: string; i: string; sel?: boolean }
const TREE: { t: string; cad?: boolean; kids?: Kid[] }[] = [
  {
    t: '常用构件类型',
    kids: [
      { t: '轴网', key: 'J', i: 'tGrid' }, { t: '筏板基础', key: 'M', i: 'tRaft' }, { t: '框柱', key: 'Z', i: 'tCol' },
      { t: '剪力墙', key: 'Q', i: 'tWall' }, { t: '梁', key: 'L', i: 'tBeam' }, { t: '现浇板', key: 'B', i: 'tSlab' },
    ],
  },
  { t: '轴线' }, { t: '柱' }, { t: '墙' }, { t: '门窗洞' }, { t: '梁' }, { t: '板' },
  {
    t: '基础',
    kids: [
      { t: '基础梁', key: 'F', i: 'tFBeam' }, { t: '筏板基础', key: 'M', i: 'tRaft' }, { t: '集水坑', key: 'K', i: 'tPit' },
      { t: '柱墩', key: 'Y', i: 'tPier' }, { t: '筏板主筋', key: 'R', i: 'tMain', sel: true }, { t: '筏板负筋', key: 'X', i: 'tNeg' },
      { t: '独立基础', key: 'P', i: 'tIso' }, { t: '条形基础', key: 'T', i: 'tStrip' }, { t: '桩承台', key: 'V', i: 'tCap' },
      { t: '承台梁', key: 'F', i: 'tFBeam' }, { t: '桩', key: 'U', i: 'tPile' }, { t: '基础板带', key: 'W', i: 'tBand' },
    ],
  },
  { t: '其它' }, { t: '自定义' }, { t: 'CAD识别', cad: true },
]

// 绘图区用屏幕坐标写，viewBox 已经对齐
const SHAPE = '655,168 762,168 1125,378 1141,388 1141,527 1125,537 885,675 535,675 293,537 277,527 277,388 293,378'
const DIAGS = ['293,378 655,168', '762,168 1125,378', '293,537 535,675', '1125,537 885,675', '277,388 293,378', '1125,378 1141,388', '277,527 293,537', '1125,537 1141,527']
const YELLOW = [
  [551, 230, 551, 675], [531, 230, 551, 230], [670, 168, 670, 675], [706, 168, 706, 675], [903, 250, 903, 668], [885, 250, 903, 250],
  [364, 338, 1054, 338], [364, 320, 364, 338], [1054, 320, 1054, 338], [408, 602, 1010, 602], [408, 582, 408, 602], [1010, 582, 1010, 602],
]
const WHITE = [[277, 168, 277, 390], [1141, 168, 1141, 390], [708, 168, 708, 458]]
const RED = [
  [217, 197, 708, 197], [217, 379, 1366, 379], [217, 388, 1366, 388], [217, 457, 1141, 457], [217, 526, 1366, 526], [217, 536, 1366, 536],
  [469, 168, 469, 675], [628, 168, 628, 675], [788, 168, 788, 675], [1129, 168, 1129, 675], [708, 458, 708, 675], [276, 526, 276, 675], [1141, 526, 1141, 675],
]
const AXES = [{ t: '3', x: 469, y: 180 }, { t: '4', x: 1129, y: 180 }, { t: 'D', x: 230, y: 197 }]
const HANDLES = [
  [492, 263], [926, 263], [278, 388], [293, 379], [708, 379], [1125, 379], [1141, 388], [277, 458], [1141, 458],
  [277, 527], [293, 537], [708, 537], [1125, 537], [1141, 527], [492, 652], [925, 652],
]

// Arial 字形的 [左边距, 墨迹宽, 步进]，单位 em，用来把每个字压到原图的宽度
const METRICS: Record<string, number[]> = {
  B: [0.073, 0.55, 0.667], Z: [0.02, 0.57, 0.611], J: [0.02, 0.42, 0.5], '-': [0.03, 0.27, 0.333], '1': [0.11, 0.25, 0.556],
  ':': [0.09, 0.09, 0.278], C: [0.05, 0.63, 0.722], '2': [0.03, 0.47, 0.556], '5': [0.03, 0.48, 0.556], '@': [0.05, 0.92, 1.015],
  '7': [0.05, 0.47, 0.556], '6': [0.04, 0.47, 0.556], '0': [0.04, 0.47, 0.556],
}
const stamp = (base: number, list: [string, number, number][]) =>
  list.map(([ch, left, w]) => {
    const size = ch === '@' ? 94 : 120
    const [lsb, ink, adv] = METRICS[ch]
    const s = w / (ink * size)
    const y = ch === '@' ? base - 19 : ch === '-' ? base - 8 : base
    return { ch, x: left - lsb * size * s, y, size, len: adv * size * s }
  })
const GLYPHS = [
  ...stamp(405, [['B', 224, 50], ['Z', 290, 50], ['J', 355, 49], ['-', 414, 56], ['1', 489, 26], [':', 565, 12], ['C', 610, 54], ['2', 673, 52], ['5', 740, 48], ['@', 802, 56], ['7', 867, 53], ['5', 933, 47]]),
  ...stamp(446, [['Z', 205, 50], ['J', 279, 40], ['-', 319, 56], ['6', 395, 55], ['1', 469, 25], [':', 545, 11], ['C', 587, 57], ['1', 664, 23], ['2', 718, 52], ['@', 778, 70], ['2', 847, 51], ['0', 910, 55], ['0', 973, 55]]),
]
</script>

<style>
html, body { margin: 0; background: #f0f0f0; overflow: hidden; }
</style>

<style scoped>
.app {
  width: 1366px;
  height: 768px;
  display: grid;
  grid-template-columns: 217px 1fr;
  grid-template-rows: 23px 31px 29px 28px 28px 29px 507px 33px 20px 40px;
  background: #f0f0f0;
  color: #111;
  font: 12px/16px "Noto Sans CJK SC", "Liberation Sans", sans-serif;
  overflow: hidden;
}
.ic { width: 16px; height: 16px; flex: none; display: block; }
.mono { font: 10px/16px "Liberation Mono", monospace; }

.title { grid-column: 1 / -1; background: #fff; display: flex; align-items: center; position: relative; z-index: 2; }
.app-ic { margin-left: 2px; }
.title-text { margin-left: 5px; font: 12px/16px "Open Sans", "Noto Sans CJK SC", sans-serif; letter-spacing: 0.33px; white-space: nowrap; }
.win { position: absolute; left: 1240px; top: 2px; width: 120px; height: 16px; }
.ime { position: absolute; left: 968px; top: 0; width: 207px; height: 28px; }
.ime-green { position: absolute; left: 5px; top: 0; width: 46px; height: 4px; background: #4cb84c; border-radius: 0 0 3px 3px; }
.ime-bar { position: absolute; left: 28px; top: 3px; width: 178px; height: 23px; box-sizing: border-box; border: 1px solid #b4cde0; background: #fff; display: flex; align-items: center; padding-left: 1px; }
.ime-slot { width: 16px; height: 16px; padding: 0 3px; flex: none; text-align: center; color: #2c86d8; }
.ime-zh { font: bold 15px/16px "Noto Sans CJK SC", sans-serif; }
.ime-dot { font: bold 13px/14px "Liberation Sans", sans-serif; }
.ime-s { position: absolute; left: 2px; top: 5px; width: 25px; height: 22px; z-index: 1; background: #f0501e; border-radius: 5px; color: #fff; font: bold 20px/22px "Liberation Sans", sans-serif; text-align: center; transform: rotate(-6deg); }

.menu { grid-column: 1 / -1; display: flex; padding: 1px 0 1px 938px; }
.news { width: 189px; padding-left: 28px; box-sizing: border-box; line-height: 27px; color: #5a3000; background: #f7f7f7; }
.account { flex: 1; display: flex; align-items: center; gap: 4px; padding-left: 3px; padding-bottom: 2px; background: #f5f5f5; position: relative; }
.phone { font: 12.500px/16px "Open Sans", sans-serif; }
.account .caret { margin-left: 2px; }
.beans { margin-left: 7px; }
.bell { margin-left: 6px; }
.account .more { position: absolute; right: 4px; top: 5px; }

.row { grid-column: 2; display: flex; gap: 2px; padding: 1px 0 1px 2px; min-width: 0; }
.r1 { grid-column: 1 / -1; grid-row: 3; padding: 0 0 2px 2px; }
.r2 { grid-row: 4; }
.r3 { grid-row: 5; padding: 0 0 2px 2px; }
.r4 { grid-row: 6; padding-bottom: 0; }
.r5 { grid-row: 8; padding: 3px 0 6px 2px; }
.grp {
  display: flex;
  align-items: center;
  gap: 8px;
  padding-left: 3px;
  background: linear-gradient(#fcfcfc, #f4f4f4);
  border-radius: 2px;
  white-space: nowrap;
  box-sizing: border-box;
}
.g1a { width: 149px; }
.g1b { width: 547px; padding-left: 4px; gap: 7px; }
.g1c { width: 663px; padding-left: 3px; margin-left: 1px; gap: 7px; }
.g1c .sep { margin: 0 -1px; }
.g2a { width: 789px; gap: 7.600px; }
.g3a { width: 564px; gap: 7.500px; }
.g3a .sep { margin-left: 1px; }
.g3b { width: 422px; margin-left: 73px; gap: 7.800px; }
.g4a { width: 1107px; gap: 7.650px; }
.g4b { width: 33px; margin-left: 5px; }
.g5a { width: 209px; }
.g5b { width: 263px; }
.g5c { width: 406px; gap: 4px; }
.grip { width: 2px; height: 16px; flex: none; background: repeating-linear-gradient(#999 0 2px, transparent 2px 4px); margin-right: -3px; }
.sep { width: 1px; height: 20px; flex: none; background: #bbb; margin: 0 -2px; }
.more { width: 9px; height: 7px; flex: none; margin-left: auto; margin-right: 2px; align-self: flex-start; margin-top: 4px; }
.item { display: flex; align-items: center; gap: 4px; flex: none; height: 22px; }
.item.off { color: #aaa; }
.item.on { border: 1px solid #1f86d8; background: #e5f1fb; padding: 0 3px 0 2px; margin: 0 -3px; height: 24px; box-sizing: border-box; }
.item.snug { margin: 0 -3px 0 -6px; }
.item.pair-a { margin: 0 0 0 -5px; }
.item.pair-b { margin: 0 -5px 0 -8px; }
.item.cur { background: #fff; margin: 0 2px 0 -2px; padding-left: 2px; height: 26px; }
.caret { width: 0; height: 0; flex: none; border: 3px solid transparent; border-top: 3.500px solid #222; border-bottom: 0; margin-left: 5px; margin-right: -3px; }
.off .caret { border-top-color: #999; }
.tight .caret { margin-left: 2px; margin-right: -4px; }
.item.solo { margin-left: -3px; }
.solo .caret { margin: 0; }
.combo { height: 24px; background: #fff; display: flex; align-items: center; justify-content: space-between; padding-left: 2px; box-sizing: border-box; flex: none; margin-right: -5px; }
.combo b { width: 11px; height: 100%; background: #f2f2f2; display: flex; align-items: center; justify-content: center; }
.combo .caret { margin: 0; }
.combo.boxed { border: 1px solid #888; height: 23px; margin-right: -2px; }
.combo.keep { margin-right: 1px; }
.input { height: 22px; box-sizing: border-box; border: 1px solid #aaa; background: #f0f0f0; color: #888; text-align: right; padding-right: 16px; line-height: 20px; flex: none; margin-left: 2px; }
.check { width: 10px; height: 10px; border: 1px solid #777; background: #fff; flex: none; margin: 0 5px 0 4px; }

.nav { grid-column: 1; grid-row: 4 / 9; display: flex; flex-direction: column; width: 213px; padding-top: 1px; gap: 1px; box-sizing: border-box; height: 621px; }
.nav-head { height: 14px; border: 1px solid #888; display: flex; align-items: center; justify-content: space-between; background: #f6f6f6; border-radius: 2px; line-height: 14px; }
.nav-pin { width: 40px; height: 10px; margin-right: 2px; }
.nav-btn { height: 21px; line-height: 20px; text-align: center; border: 1px solid #bbb; border-bottom-color: #888; background: #f0f0f0; box-sizing: border-box; flex: none; }
.nav-btn.cur { border: 2px solid #999; border-top-color: #bbb; border-left-color: #ddd; line-height: 17px; }
.nav-tools { height: 25px; flex: none; display: flex; align-items: center; padding-left: 6px; background: #f8f8f8; border: 1px solid #ddd; box-sizing: border-box; }
.nav-tools svg { width: 42px; height: 16px; }
.tree { flex: 1; margin: 0 1px; border: 1px solid #888; background: #fff; padding-top: 2px; }
.node { height: 16px; display: flex; align-items: center; padding-left: 7px; position: relative; }
.chev { width: 10px; height: 10px; flex: none; }
.dots { width: 6px; flex: none; margin: 0 1px 0 0; border-top: 1px dotted #888; }
.node-t { margin-left: 5px; white-space: nowrap; }
.cad { margin-left: 6px; }
.new { position: absolute; left: 108px; top: -1px; height: 8px; background: #ffe000; font: bold 8px/8px "Liberation Sans", sans-serif; padding: 0 2px; }
.kidwrap { margin-left: 13px; padding-left: 18px; border-left: 1px dotted #888; }
.kids { border-left: 1px dotted #888; }
.kid { height: 16px; display: flex; align-items: center; position: relative; padding-left: 11px; gap: 4px; }
.kid::before { content: ""; position: absolute; left: 0; top: 8px; width: 10px; border-top: 1px dotted #888; }
.kid:last-child::after { content: ""; position: absolute; left: -1px; top: 9px; width: 2px; height: 8px; background: #fff; }
.kid .ic { width: 15px; height: 15px; }
.kid-t { white-space: nowrap; padding-left: 1px; line-height: 15px; }
.kid-t .mono { line-height: 15px; }
.kid.sel .kid-t { background: #d4d4d4; padding-right: 2px; }
.kid.sel .ic { background: #d4d4d4; }

.canvas { grid-column: 2; grid-row: 7; width: 1149px; height: 507px; display: block; }
.stamp { fill: #fff; font-family: "Liberation Sans", sans-serif; mix-blend-mode: difference; }
.axis { fill: #aaa; font: bold 14px "Liberation Sans", sans-serif; text-anchor: middle; }

.status { grid-column: 1 / -1; grid-row: 9; display: flex; gap: 2px; }
.cell { background: #fbfbfb; border: 1px solid #ddd; box-sizing: border-box; line-height: 18px; white-space: nowrap; padding-left: 1px; }
.cell .mono { line-height: 18px; }
.cell.mono { line-height: 18px; }
.s1 { width: 148px; }
.s2 { width: 78px; }
.s3 { width: 98px; }
.s4 { width: 48px; }
.s5 { width: 914px; }
.s6 { flex: 1; }

.task { grid-column: 1 / -1; grid-row: 10; display: flex; align-items: stretch; background: #0b1317; color: #ddd; }
.start { width: 48px; background: #000; display: flex; align-items: center; justify-content: center; flex: none; }
.search { width: 344px; background: #333; display: flex; align-items: center; flex: none; color: #999; font-size: 14px; }
.ring { width: 15px; height: 15px; border: 3px solid #e8e8e8; border-radius: 50%; margin-left: 10px; margin-right: 5px; box-sizing: content-box; }
.mic { margin-left: auto; margin-right: 13px; width: 18px; height: 18px; }
.task-btn { width: 50px; display: flex; align-items: center; justify-content: center; box-sizing: border-box; flex: none; }
.task-btn.open { width: 42px; margin: 0 4px; border-bottom: 3px solid #7ab8e8; padding-top: 3px; }
.task-btn.act { background: #2b3a42; border-bottom: 3px solid #7ab8e8; padding-top: 3px; }
.tb-ic { width: 24px; height: 24px; }
.tray-link { margin-left: 21px; width: 44px; line-height: 40px; text-align: center; color: #ccc; flex: none; }
.cpu { width: 70px; display: flex; flex-direction: column; align-items: center; justify-content: center; line-height: 19px; flex: none; }
.tray { display: flex; align-items: center; gap: 8px; margin-left: 7px; }
.tray-zh { color: #fff; font-size: 13px; margin-left: 9px; }
.tray-s { width: 14px; height: 16px; background: #f0501e; color: #fff; font: bold 13px/16px "Liberation Sans", sans-serif; text-align: center; border-radius: 3px; margin-left: 6px; }
.clock { width: 64px; margin-left: 3px; display: flex; flex-direction: column; align-items: center; justify-content: center; line-height: 19px; white-space: nowrap; flex: none; }
.notify { margin-left: auto; width: 46px; padding-right: 10px; position: relative; display: flex; align-items: center; justify-content: center; }
.badge { position: absolute; left: 22px; top: 17px; width: 15px; height: 15px; border-radius: 50%; background: #444; border: 1px solid #999; color: #fff; font: bold 11px/15px "Liberation Sans", sans-serif; text-align: center; }
</style>
